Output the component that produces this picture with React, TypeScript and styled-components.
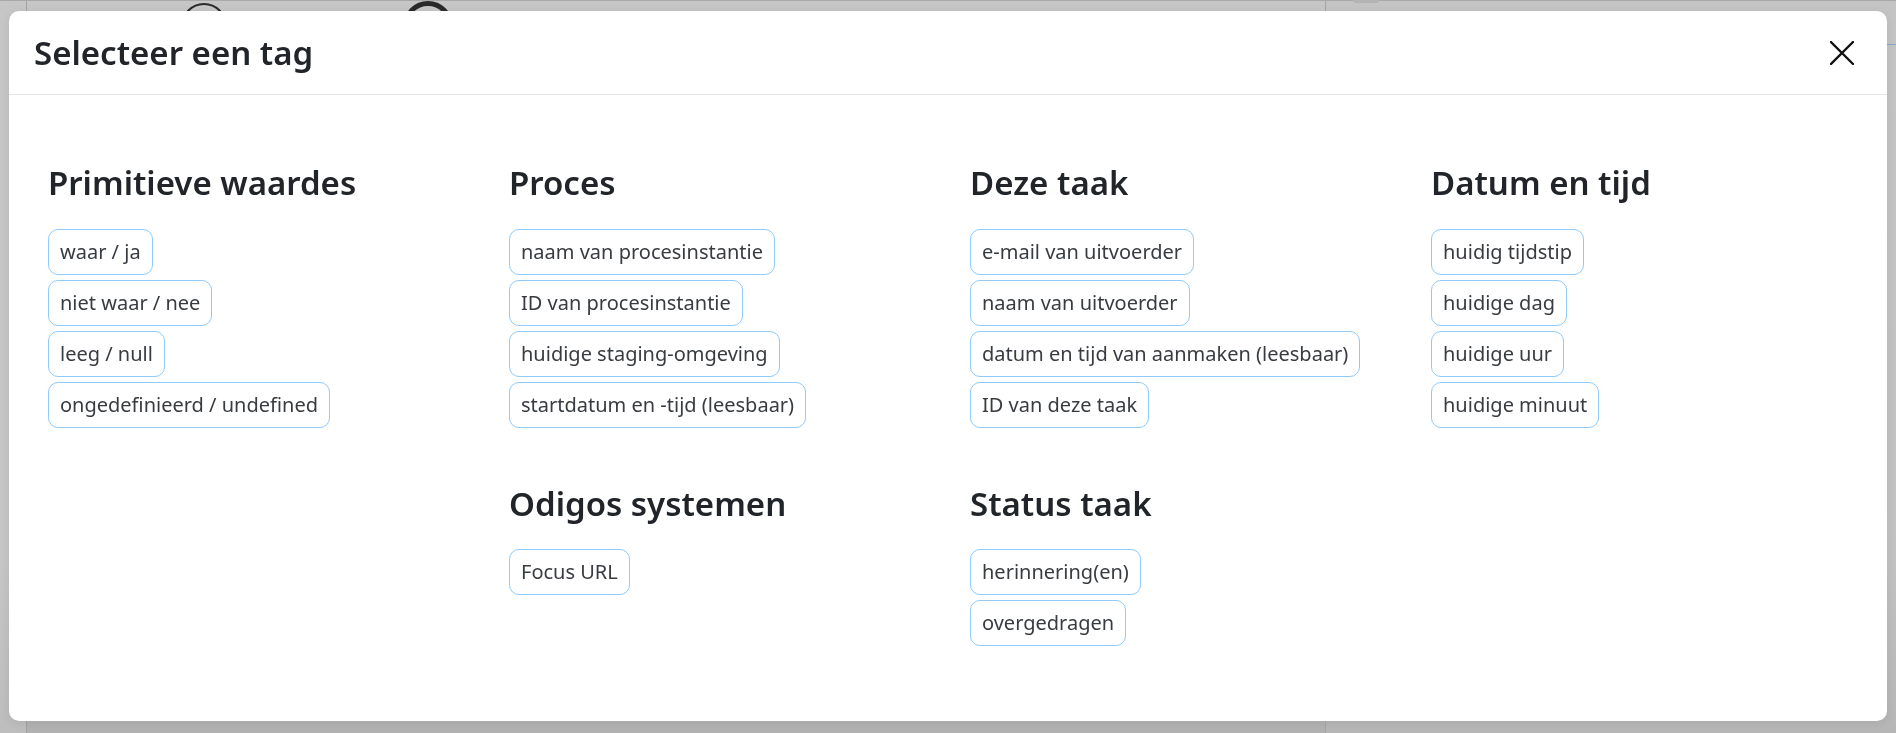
import React from 'react';
import styled, { createGlobalStyle } from 'styled-components';

type Section = { title: string; tags: string[] };

const COLUMNS: Section[][] = [
    [{ title: 'Primitieve waardes', tags: ['waar / ja', 'niet waar / nee', 'leeg / null', 'ongedefinieerd / undefined'] }],
    [
        {
            title: 'Proces',
            tags: ['naam van procesinstantie', 'ID van procesinstantie', 'huidige staging-omgeving', 'startdatum en -tijd (leesbaar)'],
        },
        { title: 'Odigos systemen', tags: ['Focus URL'] },
    ],
    [
        {
            title: 'Deze taak',
            tags: ['e-mail van uitvoerder', 'naam van uitvoerder', 'datum en tijd van aanmaken (leesbaar)', 'ID van deze taak'],
        },
        { title: 'Status taak', tags: ['herinnering(en)', 'overgedragen'] },
    ],
    [{ title: 'Datum en tijd', tags: ['huidig tijdstip', 'huidige dag', 'huidige uur', 'huidige minuut'] }],
];

const GlobalStyle = createGlobalStyle`
    * {
        box-sizing: border-box;
    }
    html, body {
        margin: 0;
        padding: 0;
        height: 100%;
        overflow: hidden;
    }
    body {
        font-family: "Noto Sans", "Open Sans", sans-serif;
        background: #c6c6c6;
    }
`;

/* the dimmed app behind the dialog */
const AppShell = styled.div`
    position: fixed;
    inset: 0;
    display: flex;
    border-top: 1px solid #a9a9a9;
`;

const SideGutter = styled.div`
    width: 27px;
    border-right: 1px solid #a2a2a2;
    background: linear-gradient(#c6c6c6 0, #c6c6c6 560px, #bdbdbd 733px);
`;

const DiagramArea = styled.div`
    position: relative;
    flex: 1;
    background: linear-gradient(#c6c6c6 0, #c6c6c6 560px, #b1b1b1 733px);
`;

const Node = styled.div<{ $left: number; $size: number; $border: number; $top: number }>`
    position: absolute;
    left: ${(p) => p.$left}px;
    top: ${(p) => p.$top}px;
    width: ${(p) => p.$size}px;
    height: ${(p) => p.$size}px;
    border-radius: 50%;
    border: ${(p) => p.$border}px solid #2a2a2a;
`;

const SidePanel = styled.div`
    width: 571px;
    border-left: 1px solid #a5a5a5;
    background: linear-gradient(#c4c4c4 0, #c2c2c2 560px, #b6b6b6 733px);
    display: flex;
    flex-direction: column;
`;

const PanelTab = styled.div`
    margin: -4px 0 0 27px;
    width: 26px;
    height: 6px;
    border-radius: 3px;
    background: #b4b4b4;
`;

const PanelRule = styled.div`
    margin-top: 41px;
    height: 1px;
    background: #8aa3cf;
`;

/* dialog */
const Overlay = styled.div`
    position: fixed;
    inset: 0;
    padding: 11px 9px 12px 9px;
    display: flex;
`;

const Dialog = styled.div`
    flex: 1;
    display: flex;
    flex-direction: column;
    background: #fff;
    border-radius: 10px;
    box-shadow: 0 2px 10px rgba(0, 0, 0, 0.08);
`;

const Header = styled.header`
    height: 84px;
    flex-shrink: 0;
    display: flex;
    align-items: center;
    justify-content: space-between;
    padding: 0 22px 0 25px;
    border-bottom: 1px solid #e4e7e9;
`;

const Title = styled.h1`
    margin: 0;
    font-size: 33px;
    line-height: 1.2;
    font-weight: 600;
    color: #212529;
`;

const CloseButton = styled.button`
    width: 46px;
    height: 46px;
    display: flex;
    align-items: center;
    justify-content: center;
    padding: 0;
    border: none;
    background: transparent;
    color: #111;
    cursor: pointer;
`;

const Body = styled.div`
    display: grid;
    grid-template-columns: repeat(4, 1fr);
    column-gap: 44px;
    padding: 68px 39px 0 39px;
`;

const Column = styled.div`
    display: flex;
    flex-direction: column;
    gap: 56px;
`;

const SectionTitle = styled.h2`
    margin: 0 0 26px 0;
    font-size: 33px;
    line-height: 1.2;
    font-weight: 600;
    color: #212529;
`;

const TagList = styled.div`
    display: flex;
    flex-direction: column;
    align-items: flex-start;
    gap: 5px;
`;

const Tag = styled.button`
    font-family: inherit;
    font-size: 20px;
    line-height: 30px;
    padding: 7px 11px;
    border: 1.5px solid #90caf9;
    border-radius: 10px;
    background: #fff;
    color: #383c40;
    cursor: pointer;
    white-space: nowrap;
`;

export default function App() {
    return (
        <>
            <GlobalStyle />
            <AppShell>
                <SideGutter />
                <DiagramArea>
                    <Node $left={154} $top={2} $size={46} $border={2} />
                    <Node $left={376} $top={0} $size={50} $border={5} />
                </DiagramArea>
                <SidePanel>
                    <PanelTab />
                    <PanelRule />
                </SidePanel>
            </AppShell>
            <Overlay>
                <Dialog role="dialog">
                    <Header>
                        <Title>Selecteer een tag</Title>
                        <CloseButton aria-label="Sluiten">
                            <svg width="24" height="24" viewBox="0 0 24 24" fill="none">
                                <path d="M1 1L23 23M23 1L1 23" stroke="currentColor" strokeWidth="2.3" strokeLinecap="square" />
                            </svg>
                        </CloseButton>
                    </Header>
                    <Body>
                        {COLUMNS.map((sections, i) => (
                            <Column key={i}>
                                {sections.map((section) => (
                                    <div key={section.title}>
                                        <SectionTitle>{section.title}</SectionTitle>
                                        <TagList>
                                            {section.tags.map((tag) => (
                                                <Tag key={tag}>{tag}</Tag>
                                            ))}
                                        </TagList>
                                    </div>
                                ))}
                            </Column>
                        ))}
                    </Body>
                </Dialog>
            </Overlay>
        </>
    );
}
